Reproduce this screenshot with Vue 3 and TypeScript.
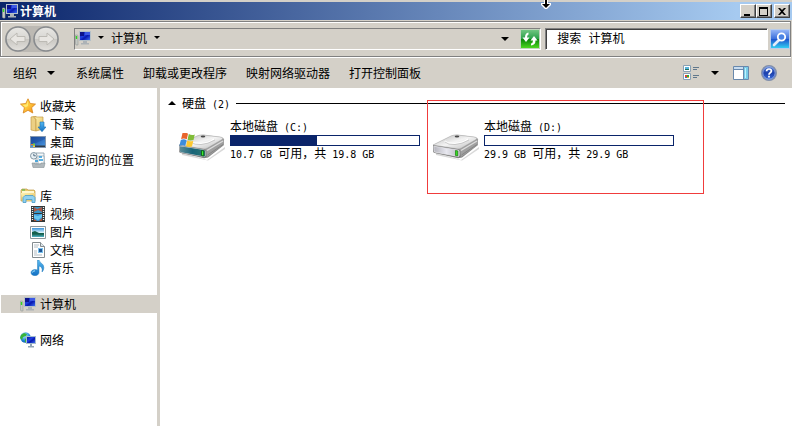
<script setup lang="ts">
import { ref } from 'vue'

interface NavItem {
  label: string
  icon: string
}
interface NavGroup extends NavItem {
  children: NavItem[]
}
interface Drive {
  name: string
  icon: string
  free: number
  total: number
  marked: boolean
}

const groups: NavGroup[] = [
  {
    label: '收藏夹',
    icon: 'star',
    children: [
      { label: '下载', icon: 'download' },
      { label: '桌面', icon: 'desktop' },
      { label: '最近访问的位置', icon: 'recent' },
    ],
  },
  {
    label: '库',
    icon: 'library',
    children: [
      { label: '视频', icon: 'video' },
      { label: '图片', icon: 'picture' },
      { label: '文档', icon: 'document' },
      { label: '音乐', icon: 'music' },
    ],
  },
  { label: '计算机', icon: 'computer', children: [] },
  { label: '网络', icon: 'network', children: [] },
]

const drives: Drive[] = [
  { name: '本地磁盘 (C:)', icon: 'system-drive', free: 10.7, total: 19.8, marked: false },
  { name: '本地磁盘 (D:)', icon: 'drive', free: 29.9, total: 29.9, marked: true },
]

const commands = ['系统属性', '卸载或更改程序', '映射网络驱动器', '打开控制面板']
const selected = ref('计算机')
const query = ref('')

// Half-width characters are set in a monospaced face half as wide as a Chinese character.
function runs(text: string) {
  return (text.match(/[\x20-\x7e]+|[^\x20-\x7e]+/g) ?? []).map((part) => ({
    part,
    latin: /^[\x20-\x7e]/.test(part),
  }))
}
function usedPercent(d: Drive) {
  return ((d.total - d.free) / d.total) * 100
}
function capacity(d: Drive) {
  return `${d.free} GB 可用，共 ${d.total} GB`
}
</script>

<template>
  <svg class="sprites" aria-hidden="true">
    <defs>
      <linearGradient id="g-screen" x1="0" y1="0" x2="1" y2="1">
        <stop offset="0" stop-color="#0a1a9c" /><stop offset=".4" stop-color="#1f3fe0" />
        <stop offset=".6" stop-color="#0818b0" /><stop offset="1" stop-color="#3c6cf0" />
      </linearGradient>
      <linearGradient id="g-star" x1="0" y1="0" x2="1" y2="1">
        <stop offset="0" stop-color="#ffe04a" /><stop offset=".5" stop-color="#ffc83c" /><stop offset="1" stop-color="#f08010" />
      </linearGradient>
      <linearGradient id="g-folder" x1="0" y1="0" x2="1" y2="1">
        <stop offset="0" stop-color="#fff3b4" /><stop offset="1" stop-color="#e3bd58" />
      </linearGradient>
      <linearGradient id="g-blue" x1="0" y1="0" x2="0" y2="1">
        <stop offset="0" stop-color="#56b8f0" /><stop offset="1" stop-color="#1270c4" />
      </linearGradient>
      <linearGradient id="g-desk" x1="0" y1="0" x2="1" y2="1">
        <stop offset="0" stop-color="#184898" /><stop offset="1" stop-color="#4a98e4" />
      </linearGradient>
      <linearGradient id="g-photo" x1="0" y1="0" x2="0" y2="1">
        <stop offset="0" stop-color="#3c94dc" /><stop offset=".5" stop-color="#d4f0f8" />
        <stop offset=".55" stop-color="#2c7c64" /><stop offset=".7" stop-color="#1c6858" /><stop offset="1" stop-color="#50b4c8" />
      </linearGradient>
      <linearGradient id="g-top" x1="0" y1="0" x2="1" y2="1">
        <stop offset="0" stop-color="#b4b4b4" /><stop offset=".5" stop-color="#f4f4f4" /><stop offset="1" stop-color="#b8b8b8" />
      </linearGradient>
      <linearGradient id="g-side" x1="0" y1="0" x2="1" y2="1">
        <stop offset="0" stop-color="#d8d8d8" /><stop offset="1" stop-color="#6c6c6c" />
      </linearGradient>
      <linearGradient id="g-front" x1="0" y1="0" x2="1" y2="0">
        <stop offset="0" stop-color="#b4b4bc" /><stop offset=".5" stop-color="#e8e8f0" /><stop offset="1" stop-color="#b8b8c0" />
      </linearGradient>
      <linearGradient id="g-front-sys" x1="0" y1="0" x2="1" y2="0">
        <stop offset="0" stop-color="#5c8c98" /><stop offset=".5" stop-color="#186478" /><stop offset="1" stop-color="#2c7874" />
      </linearGradient>
      <linearGradient id="g-orb" x1="0" y1="0" x2="0" y2="1">
        <stop offset="0" stop-color="#e8e7e4" /><stop offset=".48" stop-color="#d8d7d3" />
        <stop offset=".5" stop-color="#c8c6c1" /><stop offset="1" stop-color="#e4e2de" />
      </linearGradient>
      <linearGradient id="g-green" x1="0" y1="0" x2="0" y2="1">
        <stop offset="0" stop-color="#74c884" /><stop offset=".48" stop-color="#2ca04a" />
        <stop offset=".5" stop-color="#088408" /><stop offset="1" stop-color="#50dc20" />
      </linearGradient>
      <linearGradient id="g-find" x1="0" y1="0" x2="0" y2="1">
        <stop offset="0" stop-color="#98b8f8" /><stop offset=".48" stop-color="#3c70dc" />
        <stop offset=".5" stop-color="#1c50cc" /><stop offset="1" stop-color="#34d4f4" />
      </linearGradient>
      <radialGradient id="g-globe" cx=".4" cy=".3" r=".8">
        <stop offset="0" stop-color="#b0ecff" /><stop offset=".6" stop-color="#2088d8" /><stop offset="1" stop-color="#0850a0" />
      </radialGradient>
      <linearGradient id="g-help" x1="0" y1="0" x2="0" y2="1">
        <stop offset="0" stop-color="#5c84d8" /><stop offset=".5" stop-color="#1c40ac" /><stop offset="1" stop-color="#3c70e0" />
      </linearGradient>

      <symbol id="computer" viewBox="0 0 16 16">
        <path d="M.5 5h2l.5 1v9H1l-.5-1z" fill="#c4c8c4" stroke="#989c98" stroke-width=".6" />
        <path d="M1.500 6v3" stroke="#30d820" stroke-width="1.400" />
        <path d="M4 1h12v10H4z" fill="#b4c0c8" />
        <path d="M5 2h10v8H5z" fill="url(#g-screen)" />
        <path d="M5 2h4v4H5z" fill="#0c128c" /><path d="M10 2h5v3h-5z" fill="#3c58e4" />
        <path d="M8 11h4v2h2v1.500H6V13h2z" fill="#acb2b6" />
      </symbol>
      <symbol id="network" viewBox="0 0 16 16">
        <circle cx="5.500" cy="5.500" r="5.200" fill="url(#g-globe)" />
        <path d="M1 3l3-2 3 1-1 2-3 1-1 3-2-2zM5 7l3-1 1 2-2 3-2-1z" fill="#38b438" />
        <path d="M6 4h10v8H6z" fill="#a4bccc" /><path d="M7 5h8v6H7z" fill="url(#g-screen)" />
        <path d="M10 12h2v2h2v1.500H8V14h2z" fill="#90a4b4" />
      </symbol>
      <symbol id="star" viewBox="0 0 16 16">
        <path d="M8 .8l2.200 4.700 5.300.6-3.900 3.600 1.200 5.300L8 12.300 3.200 15l1.200-5.300L.5 6.100l5.300-.6z" fill="url(#g-star)" stroke="#d8841c" stroke-width=".8" />
        <path d="M8 2.500L6.600 6.400l-4 .5 3.100 2.300L8 8z" fill="#fff080" opacity=".8" />
      </symbol>
      <symbol id="download" viewBox="0 0 16 16">
        <path d="M1 1l5-1v15l-5-1z" fill="#ecd084" stroke="#c49c48" stroke-width=".7" />
        <path d="M4 1h9v12l-7 2V3L4 2z" fill="url(#g-folder)" stroke="#c49c48" stroke-width=".7" />
        <path d="M10 6h4v5h2l-4 4.700L8 11h2z" fill="url(#g-blue)" stroke="#1c70b4" stroke-width=".6" />
      </symbol>
      <symbol id="desktop" viewBox="0 0 16 16">
        <path d="M0 2h16v12H0z" fill="#8498b0" /><path d="M1 3h14v10H1z" fill="url(#g-desk)" />
        <path d="M1 3h14v2L6 9 1 10z" fill="#1c4ca0" opacity=".5" />
        <path d="M5 11.500h10V13H5z" fill="#303c48" />
        <path d="M1 10h2v1.500H1z" fill="#f07830" /><path d="M3 9.500h2v2H3z" fill="#70d040" /><path d="M1 11.500h2V13H1z" fill="#38a0e8" /><path d="M3 11.500h2V13H3z" fill="#f8d040" />
      </symbol>
      <symbol id="recent" viewBox="0 0 16 16">
        <path d="M6 1h8v11H6z" fill="#f4f8fa" stroke="#8498a4" stroke-width=".8" />
        <path d="M8 4h6v8H8z" fill="#fff" stroke="#8ca0ac" stroke-width=".7" />
        <path d="M9 5h3M5 9h3M9 8h4" stroke="#2898d8" stroke-width="1.300" />
        <path d="M2 11h3v1h6v-1h4l-1 4.500H3z" fill="#b0b8bc" stroke="#889498" stroke-width=".6" />
        <circle cx="3.800" cy="3.800" r="3.300" fill="#e8f0f4" stroke="#8498a4" />
        <path d="M3.800 1.800v2h2" fill="none" stroke="#446078" stroke-width=".9" />
      </symbol>
      <symbol id="library" viewBox="0 0 16 16">
        <path d="M1 2l1-1h5l1 1h6l1 1v10H1z" fill="#e8c870" stroke="#c09c48" stroke-width=".7" />
        <path d="M2 3h12v2H2z" fill="#fff8d0" /><path d="M1 5h14l-1 8H2z" fill="url(#g-folder)" />
        <path d="M2 2h3" stroke="#40b850" />
        <path d="M3 14.500V9.500l2-2h8l2 2v5h-3v-3H6v3z" fill="#90d0f0" stroke="#489cc8" stroke-width=".8" />
      </symbol>
      <symbol id="video" viewBox="0 0 16 16">
        <path d="M1 0h14v16H1z" fill="#343838" />
        <path d="M4 1h8v6H4z" fill="#3898c8" /><path d="M4 8h8v7H4z" fill="#3898dc" />
        <path d="M4 1l3 2 5-2v5L8 4 4 6z" fill="#a85848" /><path d="M4 9l4 1 4-2v3l-4 3-4-2z" fill="#68c8f0" /><path d="M4 13l3 2H4zM12 12v3H9z" fill="#b45030" />
        <path d="M2.500 1v14M13.500 1v14" stroke="#f4f4f4" stroke-width="1.300" stroke-dasharray="1 1" />
      </symbol>
      <symbol id="picture" viewBox="0 0 16 16">
        <path d="M.5 2.500h15v12H.5z" fill="#fff" stroke="#8c989c" /><path d="M2 4h12v9H2z" fill="url(#g-photo)" />
        <path d="M2 8l3-1 4 2h5v1H2z" fill="#14604c" />
      </symbol>
      <symbol id="document" viewBox="0 0 16 16">
        <path d="M2.500.500h8l4 4v11h-12z" fill="#fff" stroke="#848c90" /><path d="M10.500.500v4h4" fill="#dce4e8" stroke="#848c90" />
        <path d="M4 3h5M4 5h4M4 9h3M4 11h3M4 13h8" stroke="#a8b4bc" stroke-width=".9" />
        <path d="M8 6h5v5H8z" fill="#78c0ec" /><path d="M9 7h3v3H9z" fill="#205494" />
      </symbol>
      <symbol id="music" viewBox="0 0 16 16">
        <path d="M7.500 0H9c.5 3 5 3.500 4.800 7.500 0 2-.8 3.500-1.800 4.500.8-3.500-.5-5.500-3-6v6.500c0 2-2 3.200-4 3.200s-4-1-4-3 2-3.200 4-3.200c1 0 2 .2 2.500.6z" fill="url(#g-blue)" stroke="#2880bc" stroke-width=".5" />
        <path d="M2.500 12.500c0-1 1-1.600 2.500-1.600" fill="none" stroke="#a8e4fc" />
      </symbol>

      <symbol id="drive" viewBox="0 0 48 28">
        <path d="M4 20l22 6 3 1 18-13v2L30 27.500 4 22z" fill="#a8a8a8" opacity=".45" />
        <path d="M1 12L20 2.500q3-1 6-.7L43 4q3 .6 3 2.500V12L30 24.500l-4 .8L3 20q-2-.5-2-2.500z" fill="url(#g-side)" />
        <path d="M1 12L19 3q3-1.400 6.500-1L42 4q4.500.8 1.500 2.800L29.500 15q-2 1.200-4.500.8z" fill="url(#g-top)" stroke="#b4b4b4" stroke-width=".6" />
        <path d="M13 8q2 3 10 2.500T36 6" fill="none" stroke="#fff" stroke-width="1.600" /><path d="M13 9q3 3 10 2.500T37 7" fill="none" stroke="#b4b4b4" stroke-width=".7" />
        <ellipse cx="25" cy="3.600" rx="2.300" ry="1" fill="#484848" />
        <path d="M28 16L46 6v5.500L29 24z" fill="#a0a0a0" /><path d="M29 17.500L45 8" stroke="#dcdcdc" stroke-width="1.400" /><path d="M29.500 22L45 11.500" stroke="#848484" />
        <path d="M1 12.300l25.500 3.900q1.700.3 1.700 2v4.600q0 2-2 1.800L3 20q-2-.4-2-2.200z" fill="#787878" />
        <path d="M1.800 13.200l24.200 3.900q1.200.2 1.200 1.300v3.800q0 1.300-1.100 1.200L3.300 19.200q-1.300-.2-1.300-1.300z" fill="url(#g-front)" stroke="#ececf0" stroke-width=".7" />
        <path d="M23.500 17.500l2.200.4v5l-2.200-.4z" fill="#38dc20" stroke="#14800c" stroke-width=".7" />
      </symbol>
      <symbol id="system-drive" viewBox="0 0 48 28">
        <use href="#drive" width="48" height="28" />
        <path d="M1.800 13.200l24.200 3.900q1.200.2 1.200 1.300v3.800q0 1.300-1.100 1.200L3.300 19.200q-1.300-.2-1.300-1.300z" fill="url(#g-front-sys)" />
        <path d="M23.500 17.500l2.200.4v5l-2.200-.4z" fill="#38f030" stroke="#084808" stroke-width=".7" />
        <path d="M4.500 0q3-1 5.500.8L8.800 6.300q-2.800-1.500-5.700-.3z" fill="#e8642c" /><path d="M10.800 1q3 1.600 6 .4L15.500 7q-3 1-6-.3z" fill="#80bc38" />
        <path d="M2.800 7q3-1.400 5.800.2L7.300 13q-3-1.500-5.900-.2z" fill="#3c8cdc" /><path d="M9.300 7.400q3 1.600 6 .4L14 13.500q-3 1-6-.3z" fill="#fcc830" />
      </symbol>
    </defs>
  </svg>

  <div class="window">
    <header class="titlebar">
      <svg class="title-icon"><use href="#computer" /></svg>
      <h1>计算机</h1>
      <button class="caption" aria-label="最小化"><svg viewBox="0 0 12 11"><path d="M2 8h6v2H2z" /></svg></button>
      <button class="caption" aria-label="最大化"><svg viewBox="0 0 12 11"><path d="M1 1h9v9H1zM2 3v6h7V3z" fill-rule="evenodd" /></svg></button>
      <button class="caption close" aria-label="关闭"><svg viewBox="0 0 12 11"><path d="M2 2h2l2 2 2-2h2L7 5.500 10 9H8L6 7 4 9H2l3-3.500z" /></svg></button>
      <svg class="pointer" viewBox="0 0 10 9"><path d="M3 0h4v3h3v2L6 9H4L0 5V3h3z" fill="#fff" /><path d="M4 0h2v4h3L5 8 1 4h3z" /></svg>
    </header>

    <div class="navbar">
      <div class="travel">
        <button class="orb" aria-label="后退" disabled>
          <svg viewBox="0 0 26 26"><circle cx="13" cy="13" r="12" fill="url(#g-orb)" stroke="#888b8e" stroke-width="1.600" /><path d="M5 13l7-6v3.500h8v5h-8V19z" fill="#e8e6e2" stroke="#bcbab4" /></svg>
        </button>
        <button class="orb" aria-label="前进" disabled>
          <svg viewBox="0 0 26 26"><circle cx="13" cy="13" r="12" fill="url(#g-orb)" stroke="#888b8e" stroke-width="1.600" /><path d="M21 13l-7-6v3.500H6v5h8V19z" fill="#e8e6e2" stroke="#bcbab4" /></svg>
        </button>
      </div>
      <div class="address">
        <div class="crumbs">
          <svg class="icon"><use href="#computer" /></svg>
          <button class="plain" aria-label="位置"><i class="tri small"></i></button>
          <button class="plain">计算机</button>
          <button class="plain" aria-label="子文件夹"><i class="tri small"></i></button>
        </div>
        <button class="plain history" aria-label="以前的位置"><i class="tri"></i></button>
        <button class="square" aria-label="刷新">
          <svg viewBox="0 0 20 20"><path d="M.5.500h19v19H.5z" fill="url(#g-green)" stroke="#c0d4bc" /><path d="M8.500 3.500v2Q7 6 7 8.500h2.500L6 13 2.500 8.500H5q0-4.500 3.500-5zM14 7l3.500 4.500H15.500q0 4.500-4.500 5v-2q2-.5 2-3h-2.500z" fill="#fff" /></svg>
        </button>
      </div>
      <div class="search">
        <input v-model="query" type="search" aria-label="搜索" placeholder="搜索 计算机" />
      </div>
      <button class="square find" aria-label="开始搜索">
        <svg viewBox="0 0 20 20"><path d="M.5.500h19v19H.5z" fill="url(#g-find)" stroke="#b8ccec" /><path d="M9 11l-5 5" stroke="#e4ecfa" stroke-width="2.600" stroke-linecap="round" /><circle cx="11.500" cy="8" r="3.700" fill="#4c84e4" stroke="#fff" stroke-width="1.800" /></svg>
      </button>
    </div>

    <div class="commands">
      <button class="plain organize">组织<i class="tri"></i></button>
      <button v-for="c in commands" :key="c" class="plain">{{ c }}</button>
      <div class="views">
        <button class="plain" aria-label="更改视图">
          <svg class="icon" viewBox="0 0 16 16"><path d="M.5.500h7v6h-7zM.5 8.500h7v6h-7z" fill="#fff" stroke="#88a0b4" /><path d="M2 2h4v3H2z" fill="#58b4dc" /><path d="M2 4h4v1H2z" fill="#207060" /><path d="M2 10h2v2H2z" fill="#e04828" /><path d="M4 10h2v2H4z" fill="#28a840" /><path d="M2 12h2v1H2z" fill="#3068d8" /><path d="M4 12h2v1H4z" fill="#f0b020" /><path d="M10 2.500h6M10 4.500h4M10 10.500h6M10 12.500h4" stroke="#60788c" /></svg>
        </button>
        <button class="plain" aria-label="视图选项"><i class="tri"></i></button>
        <button class="plain pane" aria-label="预览窗格">
          <svg class="icon" viewBox="0 0 16 16"><path d="M.5 1.500h15v13H.5z" fill="#fff" stroke="#6888ac" /><path d="M1 2h14v2H1z" fill="#c8dcf0" /><path d="M1 4.500h9M10.500 2v12" stroke="#6888ac" /><path d="M11 2h4v12h-4z" fill="#78cce8" /><path d="M12 3h1v10h-1z" fill="#c0f0fc" /></svg>
        </button>
        <button class="plain" aria-label="帮助">
          <svg class="icon" viewBox="0 0 16 16"><circle cx="8" cy="8" r="7.400" fill="url(#g-help)" stroke="#8490a8" stroke-width="1.200" /><circle cx="8" cy="8" r="6.200" fill="none" stroke="#b8c8ec" stroke-width=".7" /><path d="M5.600 6.200Q5.600 4 8 4t2.400 2.100Q10.400 7.200 9 8 8 8.600 8 9.800" fill="none" stroke="#fff" stroke-width="1.700" /><path d="M7.100 10.800h1.800v1.700H7.100z" fill="#fff" /></svg>
        </button>
      </div>
    </div>

    <div class="body">
      <nav class="sidebar" aria-label="导航窗格">
        <ul v-for="g in groups" :key="g.label">
          <li>
            <button class="row" :class="{ current: selected === g.label }" @click="selected = g.label">
              <svg class="icon"><use :href="'#' + g.icon" /></svg>{{ g.label }}
            </button>
          </li>
          <li v-for="c in g.children" :key="c.label">
            <button class="row child" :class="{ current: selected === c.label }" @click="selected = c.label">
              <svg class="icon"><use :href="'#' + c.icon" /></svg>{{ c.label }}
            </button>
          </li>
        </ul>
      </nav>

      <main class="content">
        <h2 class="group-head">
          <i class="tri up"></i>
          <span class="text"><span v-for="(r, i) in runs('硬盘 (2)')" :key="i" :class="{ latin: r.latin }">{{ r.part }}</span></span>
          <span class="rule"></span>
        </h2>
        <div class="drives">
          <article v-for="d in drives" :key="d.name" class="drive" :class="{ marked: d.marked }">
            <svg class="drive-icon"><use :href="'#' + d.icon" /></svg>
            <div class="info">
              <div class="text name"><span v-for="(r, i) in runs(d.name)" :key="i" :class="{ latin: r.latin }">{{ r.part }}</span></div>
              <div class="bar" role="progressbar" :aria-label="d.name" :aria-valuenow="Math.round(usedPercent(d))">
                <div class="used" :style="{ width: usedPercent(d) + '%' }"></div>
              </div>
              <div class="text"><span v-for="(r, i) in runs(capacity(d))" :key="i" :class="{ latin: r.latin }">{{ r.part }}</span></div>
            </div>
          </article>
        </div>
      </main>
    </div>
  </div>
</template>

<style>
body {
  background: #fff;
}
</style>

<style scoped>
* {
  box-sizing: border-box;
}
.sprites {
  position: absolute;
  width: 0;
  height: 0;
}
.window {
  display: flex;
  flex-direction: column;
  min-height: 100vh;
  padding-top: 2px;
  background: #d4d0c8;
  color: #000;
  font: 12px/16px 'Noto Sans CJK SC', sans-serif;
}
button,
input {
  margin: 0;
  padding: 0;
  border: 0;
  border-radius: 0;
  background: none;
  color: inherit;
  font: inherit;
}
svg {
  display: block;
  flex: none;
}
.icon {
  width: 16px;
  height: 16px;
}
.tri {
  display: block;
  border: solid transparent;
  border-width: 4px 4px 0;
  border-top-color: #000;
}
.tri.small {
  border-width: 3px 3px 0;
}
.tri.up {
  border-width: 0 4px 4px;
  border-bottom-color: #000;
}
.plain {
  display: flex;
  align-items: center;
  white-space: nowrap;
}

.titlebar {
  position: relative;
  display: flex;
  align-items: center;
  height: 18px;
  padding: 0 2px;
  background: linear-gradient(90deg, #0a246a, #a6caf0 93%);
}
.title-icon {
  width: 16px;
  height: 16px;
}
h1 {
  flex: 1;
  margin: 0 0 0 2px;
  color: #fff;
  font-size: 12px;
  line-height: 16px;
}
.caption {
  width: 16px;
  height: 14px;
  padding: 1px;
  border: 1px solid;
  border-color: #fff #404040 #404040 #fff;
  background: #d4d0c8;
  box-shadow: inset -1px -1px #808080;
}
.caption svg {
  width: 12px;
  height: 11px;
}
.close {
  margin-left: 2px;
}
.pointer {
  position: absolute;
  top: -2px;
  left: calc(69% - 5px);
  width: 10px;
  height: 9px;
}

.navbar {
  display: flex;
  align-items: center;
  height: 36px;
  margin: 1px 1px 0 0;
  padding: 0 0 0 4px;
  border: 1px solid #808080;
  box-shadow: inset 1px 1px #fff, 0 1px #fff;
}
.travel {
  display: flex;
  gap: 2px;
  margin-right: 15px;
  border-radius: 13px;
  background: #bcb9b3;
}
.orb,
.orb svg {
  width: 26px;
  height: 26px;
}
.address,
.search {
  display: flex;
  align-items: center;
  height: 22px;
  border: 1px solid;
  border-color: #808080 #fff #fff #808080;
}
.address {
  flex: 468;
  min-width: 0;
}
.crumbs {
  display: flex;
  align-items: center;
  gap: 7px;
  padding-bottom: 3px;
}
.history {
  margin: 0 11px 0 auto;
}
.square,
.square svg {
  width: 20px;
  height: 20px;
}
.search {
  flex: 222;
  min-width: 0;
  margin-left: 4px;
  background: #fff;
  box-shadow: inset 1px 1px #404040;
}
.search input {
  width: 100%;
  min-width: 0;
  padding: 2px 11px 0;
  outline: 0;
  font-family: 'Liberation Mono', 'Noto Sans CJK SC', monospace;
}
.search input::placeholder {
  color: #000;
  opacity: 1;
}
.find {
  margin-left: 2px;
}

.commands {
  display: flex;
  align-items: center;
  gap: 19px;
  height: 31px;
  padding: 0 15px 0 13px;
}
.organize {
  gap: 10px;
  margin-right: 2px;
}
.views {
  display: flex;
  align-items: center;
  gap: 12px;
  margin-left: auto;
}
.pane {
  margin-left: 2px;
}

.body {
  display: flex;
  flex: 1;
  background: #fff;
}
.sidebar {
  display: flex;
  flex-direction: column;
  flex: none;
  gap: 18px;
  width: 160px;
  padding: 9px 0 0 1px;
  border-right: 3px solid #d4d0c8;
}
.sidebar ul {
  margin: 0;
  padding: 0;
  list-style: none;
}
.row {
  display: flex;
  align-items: center;
  gap: 4px;
  width: 100%;
  height: 18px;
  padding-left: 19px;
  white-space: nowrap;
}
.child {
  padding-left: 29px;
}
.current {
  background: #d4d0c8;
}
.content {
  flex: 1;
  min-width: 0;
  padding: 7px 7px 0 8px;
}
.text {
  white-space: pre;
}
.latin {
  font-family: 'DejaVu Sans Mono', monospace;
  font-size: 10px;
  line-height: 0;
}
.group-head {
  display: flex;
  align-items: center;
  gap: 6px;
  margin: 0;
  font-size: 12px;
  font-weight: normal;
  line-height: 16px;
}
.rule {
  flex: 1;
  height: 1px;
  background: #000;
}
.drives {
  display: flex;
  flex-wrap: wrap;
  gap: 12px;
  padding: 7px 0 0 10px;
}
.drive {
  position: relative;
  display: flex;
  gap: 4px;
  width: 242px;
}
.drive-icon {
  width: 48px;
  height: 28px;
  margin-top: 15px;
}
.info {
  flex: 1;
  line-height: 14px;
}
.name {
  line-height: 16px;
}
.bar {
  height: 11px;
  margin-top: 1px;
  border: 1px solid #0a246a;
  background: #fff;
}
.used {
  height: 100%;
  background: #0a246a;
}
.marked::after {
  position: absolute;
  inset: -18px -30px -33px -5px;
  border: 1px solid #f03c3c;
  content: '';
}
</style>
